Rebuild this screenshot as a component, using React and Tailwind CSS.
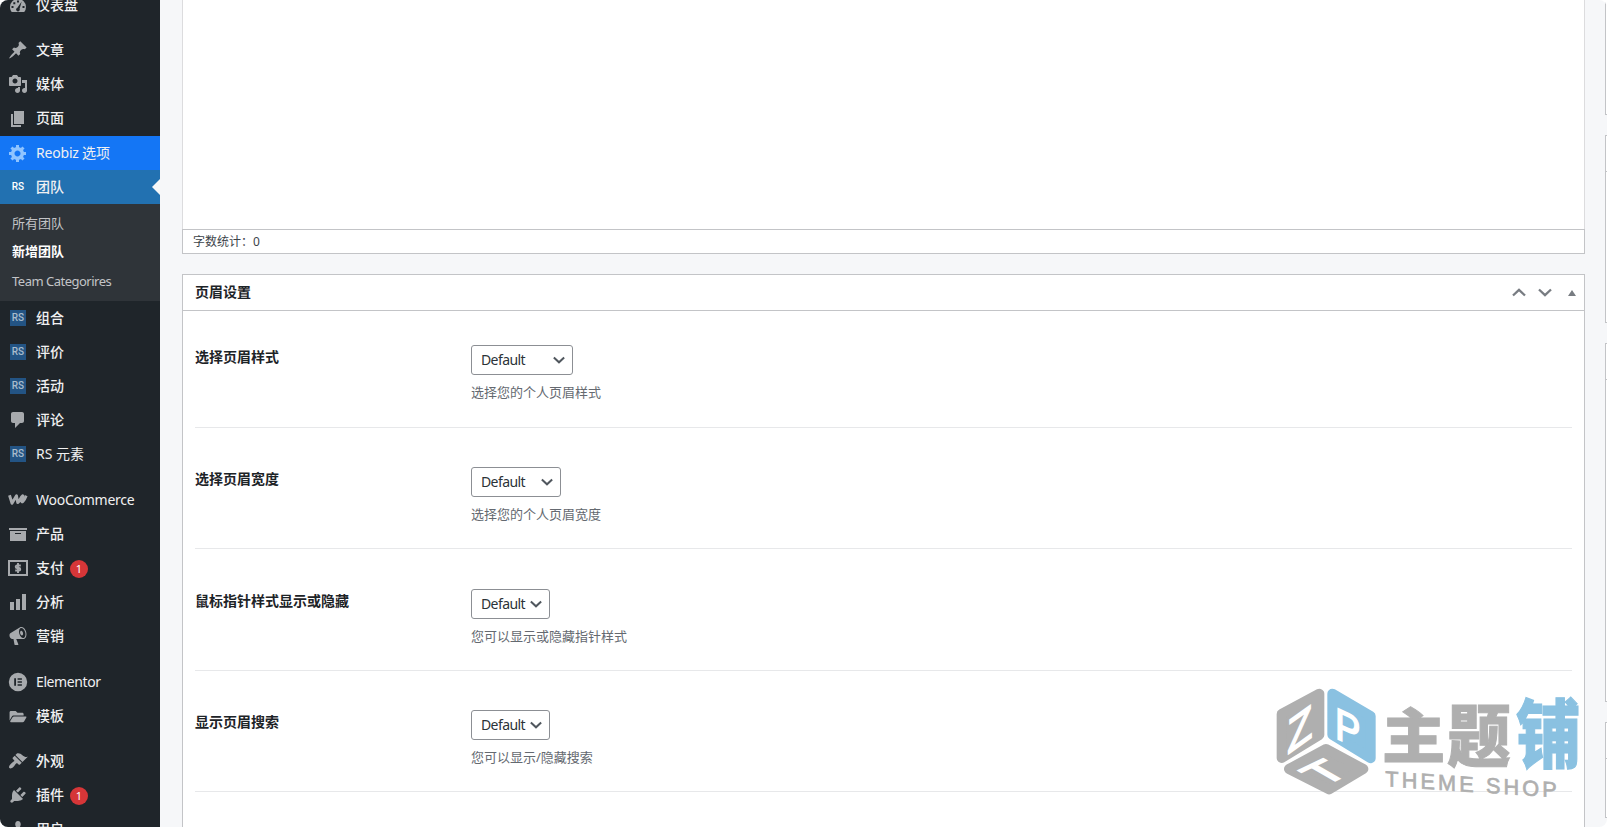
import { clsx } from 'clsx';
import { FaFolderOpen } from 'react-icons/fa';

const icons = {
  post: 'M10.44 3.02l1.82-1.82 6.36 6.35-1.83 1.82c-1.05-.68-2.48-.57-3.41.36l-.75.75c-.92.93-1.04 2.35-.35 3.41l-1.83 1.82-2.41-2.41-2.8 2.79c-.42.42-3.38 2.71-3.8 2.29s1.86-3.39 2.28-3.81l2.79-2.79L4.1 9.36l1.83-1.82c1.05.69 2.48.57 3.4-.36l.75-.75c.93-.92 1.05-2.35.36-3.41z',
  media: 'M13 11V4c0-.55-.45-1-1-1h-1.67L9 1H5L3.67 3H2c-.55 0-1 .45-1 1v7c0 .55.45 1 1 1h10c.55 0 1-.45 1-1zM7 4.5c1.38 0 2.5 1.12 2.5 2.5S8.38 9.5 7 9.5 4.5 8.38 4.5 7 5.62 4.5 7 4.5zM14 6h5v10.5c0 1.38-1.12 2.5-2.5 2.5S14 17.88 14 16.5s1.12-2.5 2.5-2.5c.17 0 .34.02.5.05V9h-3V6zm-4 8.05V13h2v3.5c0 1.38-1.12 2.5-2.5 2.5S7 17.88 7 16.5 8.12 14 9.5 14c.17 0 .34.02.5.05z',
  page: 'M6 15V2h10v13H6zm-1 1h8v2H3V5h2v11z',
  gear: 'M18 12h-2.18c-.17.7-.44 1.35-.81 1.93l1.54 1.54-2.1 2.1-1.54-1.54c-.58.36-1.23.63-1.91.79V19H8v-2.18c-.68-.16-1.33-.43-1.91-.79l-1.54 1.54-2.12-2.12 1.54-1.54c-.36-.58-.63-1.23-.79-1.91H1V9.03h2.17c.16-.7.44-1.35.8-1.94L2.43 5.55l2.1-2.1 1.54 1.54c.58-.37 1.24-.64 1.93-.81V2h3v2.18c.68.16 1.33.43 1.91.79l1.54-1.54 2.12 2.12-1.54 1.54c.36.59.64 1.24.8 1.94H18V12zm-8.5 1.5c1.66 0 3-1.34 3-3s-1.34-3-3-3-3 1.34-3 3 1.34 3 3 3z',
  comments: 'M5 2h9c1.1 0 2 .9 2 2v7c0 1.1-.9 2-2 2h-2l-5 5v-5H5c-1.1 0-2-.9-2-2V4c0-1.1.9-2 2-2z',
  archive: 'M19 4v2H1V4h18zM2 7h16v10H2V7zm11 3V9H7v1h6z',
  chart: 'M18 18V2h-4v16h4zm-6 0V7H8v11h4zm-6 0v-8H2v8h4z',
  megaphone: 'M18.15 5.94c.46 1.62.38 3.22-.02 4.48-.42 1.28-1.26 2.18-2.3 2.48-.16.06-.26.06-.4.06-.06.02-.12.02-.18.02-.06.02-.14.02-.22.02h-6.8l2.22 5.5c.02.14-.06.26-.14.34-.08.1-.24.16-.34.16H6.95c-.1 0-.26-.06-.34-.16-.08-.08-.16-.2-.14-.34l-1-5.5H4.25l-.02-.02c-.5.06-1.08-.18-1.54-.62s-.88-1.08-1.06-1.88c-.24-.8-.2-1.56-.02-2.2.18-.62.58-1.08 1.06-1.3l.02-.02 9-5.4c.1-.06.18-.1.24-.16.06-.04.14-.08.24-.12.16-.08.28-.12.5-.18 1.04-.3 2.24.1 3.22.98s1.84 2.24 2.26 3.86zm-2.58 5.98h-.02c.4-.1.74-.34 1.04-.7.58-.7.86-1.76.86-3.04 0-.64-.1-1.3-.28-1.98-.34-1.36-1.02-2.5-1.78-3.24s-1.68-1.1-2.46-.88c-.82.22-1.4.96-1.7 2-.32 1.04-.28 2.36.06 3.72.38 1.36 1 2.5 1.8 3.24.78.74 1.62 1.1 2.48.88zm-2.54-7.08c.22-.04.42-.02.62.04.38.16.76.48 1.02 1s.42 1.2.42 1.78c0 .3-.04.56-.12.8-.18.48-.44.84-.86.94-.34.1-.8-.06-1.14-.4s-.64-.86-.78-1.5c-.18-.62-.12-1.24.02-1.72s.48-.84.82-.94z',
  elementor: 'M10 .8a9.2 9.2 0 1 0 0 18.4A9.2 9.2 0 0 0 10 .8zM6.2 6.2H8v7.6H6.2zM9.6 6.2h4.3v1.5H9.6zM9.6 9.25h4.3v1.5H9.6zM9.6 12.3h4.3v1.5H9.6z',
  appearance: 'M14.48 11.06L7.41 3.99l1.5-1.5c.5-.56 2.3-.47 3.51.32 1.21.8 1.43 1.28 2.91 2.1 1.18.64 2.45 1.26 4.45.85zm-.71.71L6.7 4.7 4.93 6.47c-.39.39-.39 1.02 0 1.41l1.06 1.06c.39.39.39 1.03 0 1.42-.6.6-1.43 1.11-2.21 1.69-.35.26-.7.53-1.01.84C1.43 14.23.4 16.08 1.4 17.07c.99 1 2.84-.03 4.18-1.36.31-.31.58-.66.85-1.02.57-.78 1.08-1.61 1.69-2.21.39-.39 1.02-.39 1.41 0l1.06 1.06c.39.39 1.02.39 1.41 0z',
  plugins: 'M13.11 4.36L9.87 7.6 8 5.73l3.24-3.24c.35-.34 1.05-.2 1.56.32.52.51.66 1.21.31 1.55zm-8 1.77l.91-1.12 9.01 9.01-1.19.84c-.71.71-2.63 1.16-3.82 1.16H6.14L4.9 17.26c-.59.59-1.54.59-2.12 0-.59-.58-.59-1.53 0-2.12l1.24-1.24v-3.88c0-1.13.4-3.19 1.09-3.89zm7.26 3.97l3.24-3.24c.34-.35 1.04-.21 1.55.31.52.51.66 1.21.31 1.55l-3.24 3.25z',
  users: 'M10 9.25c-2.27 0-2.73-3.44-2.73-3.44C7 4.02 7.82 2 9.97 2c2.16 0 2.98 2.02 2.71 3.81 0 0-.41 3.44-2.68 3.44zM4 18v-4c0-2.5 2-4 4-4l2 2 2-2c2 0 4 1.5 4 4v4z',
  dashboard: 'M3.76 17h12.48A7.96 7.96 0 0 0 18 12a8 8 0 1 0-16 0c0 1.89.66 3.63 1.76 5zM9 5.5h2v2H9zM5.3 7.2h2v2h-2zM3.5 11h2v2h-2zM14.5 11h2v2h-2zM13.7 6.6l-2.1 7.2a1.8 1.8 0 1 1-2.4-.9z',
};

const menu = [
  { label: '仪表盘', icon: 'dashboard' },
  'sep',
  { label: '文章', icon: 'post' },
  { label: '媒体', icon: 'media' },
  { label: '页面', icon: 'page', row: 'h-[35px]' },
  { label: 'Reobiz 选项', icon: 'gear', row: 'h-[34px] bg-[#1476f5]', text: 'tracking-[-0.2px]' },
  { label: '团队', icon: 'rs-active', row: 'h-[34px] bg-[#2271b1]', current: true },
  'submenu',
  { label: '组合', icon: 'rs' },
  { label: '评价', icon: 'rs' },
  { label: '活动', icon: 'rs' },
  { label: '评论', icon: 'comments' },
  { label: 'RS 元素', icon: 'rs', text: 'tracking-normal' },
  'sep-lg',
  { label: 'WooCommerce', icon: 'woo', text: 'tracking-[-0.25px]' },
  { label: '产品', icon: 'archive' },
  { label: '支付', icon: 'money', badge: 1 },
  { label: '分析', icon: 'chart' },
  { label: '营销', icon: 'megaphone' },
  'sep-lg',
  { label: 'Elementor', icon: 'elementor', text: 'tracking-[-0.4px]' },
  { label: '模板', icon: 'folder' },
  'sep',
  { label: '外观', icon: 'appearance' },
  { label: '插件', icon: 'plugins', badge: 1 },
  { label: '用户', icon: 'users' },
];

const fields = [
  { label: '选择页眉样式', desc: '选择您的个人页眉样式', row: 'h-[117px]', inner: 'h-[82px]', select: 'w-[102px]' },
  { label: '选择页眉宽度', desc: '选择您的个人页眉宽度', row: 'h-[121px]', inner: 'h-[81px]', select: 'w-[90px]' },
  { label: '鼠标指针样式显示或隐藏', desc: '您可以显示或隐藏指针样式', row: 'h-[122px]', inner: 'h-[81px]', select: 'w-[79px]' },
  { label: '显示页眉搜索', desc: '您可以显示/隐藏搜索', row: 'h-[121px]', inner: 'h-[81px]', select: 'w-[79px]' },
];

function MenuIcon({ name }) {
  if (name === 'rs' || name === 'rs-active') {
    return (
      <span
        className={clsx(
          'w-4 h-4 mx-0.5 flex items-center justify-center font-["Roboto"] text-[10px] leading-none font-medium',
          name === 'rs' ? 'bg-[#235484] text-[#a9bccd]' : 'text-white'
        )}
      >
        RS
      </span>
    );
  }

  if (name === 'folder') return <FaFolderOpen className="w-[18px] h-[15px] mx-px text-[#a7aaad]" />;

  return (
    <svg
      viewBox="0 0 20 20"
      className={clsx('w-5 h-5 shrink-0', name === 'gear' ? 'text-[#8fc4ff]' : 'text-[#a7aaad]')}
      fill="currentColor"
      fillRule="evenodd"
    >
      {name === 'woo' && (
        <path
          d="M1.500 5.300L4 13.300 8.500 5.800 9.700 12.600c2-.8 2.800-5.500 5-6.800l-.8 5.600c-.2 1.600 2.200-.5 4.300-5.800"
          fill="none"
          stroke="currentColor"
          strokeWidth="2.9"
          strokeLinejoin="round"
        />
      )}
      {name === 'money' && (
        <>
          <path d="M0 2h20v16H0zM2 4v12h16V4z" />
          <path
            d="M12.800 7.500H9a1.250 1.250 0 0 0 0 2.500h2a1.250 1.250 0 0 1 0 2.500H7.200M10 5v10"
            fill="none"
            stroke="currentColor"
            strokeWidth="1.9"
          />
        </>
      )}
      {icons[name] && <path d={icons[name]} />}
    </svg>
  );
}

function MenuItem({ item }) {
  return (
    <div className={clsx('relative flex items-center pl-2 shrink-0', item.row || 'h-[34px]')}>
      <MenuIcon name={item.icon} />
      <span
        className={clsx(
          'ml-2 mb-px text-sm leading-none text-[#f0f0f1] whitespace-nowrap',
          item.text || 'font-medium'
        )}
      >
        {item.label}
      </span>
      {item.badge && (
        <span className="ml-1.5 mt-0.5 w-[18px] h-[18px] rounded-full bg-[#d63638] text-white text-[11px] flex items-center justify-center">
          {item.badge}
        </span>
      )}
      {item.current && (
        <span className="absolute right-0 top-[9px] border-y-8 border-y-transparent border-r-8 border-r-[#f6f7f9]" />
      )}
    </div>
  );
}

function Submenu() {
  return (
    <div className="h-[97px] shrink-0 bg-[#2f3439] pl-3 pt-[5px] text-[13px] text-[#c3c4c7]">
      <p className="h-7 leading-7">所有团队</p>
      <p className="h-[29px] leading-7 font-bold text-white">新增团队</p>
      <p className="h-[30px] leading-[30px] tracking-[-0.5px]">Team Categorires</p>
    </div>
  );
}

function Sidebar() {
  return (
    <aside className="w-40 shrink-0 h-full overflow-hidden bg-[#1f252a]">
      <nav className="-mt-[12px] flex flex-col">
        {menu.map((item, i) => {
          if (item === 'sep') return <div key={i} className="h-[11px] shrink-0" />;
          if (item === 'sep-lg') return <div key={i} className="h-3 shrink-0" />;
          if (item === 'submenu') return <Submenu key={i} />;
          return <MenuItem key={i} item={item} />;
        })}
      </nav>
    </aside>
  );
}

function Chevron({ up, className }) {
  return (
    <svg viewBox="0 0 14 9" className={className} fill="none" stroke="currentColor" strokeWidth="2.3">
      <path d={up ? 'M1 7.500L7 1.800l6 5.700' : 'M1 1.500l6 5.700 6-5.700'} />
    </svg>
  );
}

function Field({ field }) {
  return (
    <div className={clsx('flex items-end border-b border-[#e7e8ea]', field.row)}>
      <div className={clsx('w-[276px] text-sm leading-6 font-bold text-[#1d2327]', field.inner)}>{field.label}</div>
      <div className={field.inner}>
        <div
          className={clsx(
            'h-[30px] flex items-center justify-between border border-[#8c8f94] rounded-[3px] pl-[9px] pr-[7px] text-sm text-[#2c3338] tracking-[-0.6px]',
            field.select
          )}
        >
          Default
          <Chevron className="w-3 h-2 text-[#50575e]" />
        </div>
        <p className="mt-[7px] text-[13px] leading-5 text-[#646970]">{field.desc}</p>
      </div>
    </div>
  );
}

function Watermark() {
  return (
    <svg viewBox="0 0 1041 471" className="absolute left-[1260px] top-[670px] w-[347px] h-[157px]">
      <g strokeLinejoin="round" strokeWidth="30">
        <path d="M65 132L178 71V195L65 264Z" fill="#afafaf" stroke="#afafaf" />
        <path d="M217 71L332 138V265L217 194Z" fill="#8ac1e1" stroke="#8ac1e1" />
        <path d="M87 297L198 237L310 297L207 358Z" fill="#afafaf" stroke="#afafaf" />
      </g>
      <g fill="#fff" stroke="#fff" strokeWidth="5" fontFamily="Liberation Sans, sans-serif">
        <text transform="matrix(.95 -.68 0 1.1 82 254)" fontSize="130">Z</text>
        <text transform="matrix(.88 .4 0 1.02 225 203)" fontSize="130">P</text>
        <text transform="matrix(1.3 -.63 1.15 .65 192 348)" fontSize="100">T</text>
      </g>
      <g fontFamily="Noto Sans CJK SC, sans-serif" fontWeight="900" fontSize="190" strokeWidth="3">
        <text transform="matrix(1 0 0 .93 366 263)" fill="#afafaf" stroke="#afafaf">主</text>
        <text transform="matrix(1 0 0 1.08 562 272)" fill="#afafaf" stroke="#afafaf">题</text>
        <text transform="matrix(1.02 0 0 1.18 768 277)" fill="#8ac1e1" stroke="#8ac1e1">铺</text>
      </g>
      <text
        transform="matrix(1 .065 0 1 376 349)"
        fontFamily="Liberation Sans, sans-serif"
        fontSize="65"
        textLength="514"
        fill="#afafaf"
        stroke="#afafaf"
        strokeWidth="2"
      >
        THEME SHOP
      </text>
    </svg>
  );
}

export default function App() {
  return (
    <div className="bg-white">
      <div className='relative flex w-[1607px] h-[827px] overflow-hidden rounded-lg bg-[#f6f7f9] font-["Noto_Sans","Noto_Sans_CJK_SC",sans-serif]'>
        <Sidebar />

        <main className="ml-[22px] w-[1403px] h-full shrink-0 flex flex-col">
          <div className="h-[229px] shrink-0 bg-white border-x border-[#dcdcde]" />
          <div className="h-[25px] shrink-0 bg-white border border-[#c3c4c7] px-2.5 text-xs leading-[23px] text-[#3c434a]">
            字数统计：0
          </div>

          <section className="mt-5 flex-1 bg-white border border-b-0 border-[#c3c4c7]">
            <header className="h-9 flex items-center border-b border-[#c3c4c7] pl-3 pr-2">
              <h2 className="flex-1 mb-px text-sm font-bold text-[#1d2327]">页眉设置</h2>
              <div className="flex items-center text-[#787c82]">
                <Chevron up className="w-[14px] h-[9px]" />
                <Chevron className="ml-3 w-[14px] h-[9px]" />
                <svg viewBox="0 0 8 6" className="ml-4 w-2 h-1.5" fill="currentColor">
                  <path d="M4 0l4 6H0z" />
                </svg>
              </div>
            </header>
            <div className="px-3">
              {fields.map((field) => (
                <Field key={field.label} field={field} />
              ))}
            </div>
          </section>
        </main>

        {/* edge of the side column */}
        <div className="ml-5 w-0.5 shrink-0 flex flex-col gap-5">
          <div className="h-[115px] bg-white border-l border-b border-[#c3c4c7]" />
          <div className="h-[188px] bg-white border-l border-y border-[#c3c4c7]">
            <div className="h-9 border-b border-[#c3c4c7]" />
          </div>
          <div className="h-[359px] bg-white border-l border-y border-[#c3c4c7]">
            <div className="h-9 border-b border-[#c3c4c7]" />
          </div>
          <div className="h-[96px] bg-white border-l border-y border-[#c3c4c7]">
            <div className="h-9 border-b border-[#c3c4c7]" />
          </div>
        </div>

        <Watermark />
      </div>
    </div>
  );
}
